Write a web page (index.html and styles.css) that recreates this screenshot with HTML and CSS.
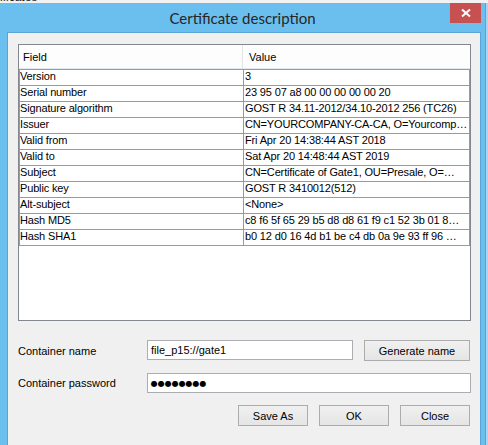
FILE: index.html
```html
<!DOCTYPE html>
<html>
<head>
<meta charset="utf-8">
<link rel="stylesheet" href="styles.css">
</head>
<body>
<div class="bg-strip"><span>ificates</span></div>
<div class="window">
  <div class="titlebar">
    <div></div>
    <div class="title">Certificate description</div>
    <div class="close">
      <svg width="10" height="8" viewBox="0 0 10 8"><path d="M1 0.5 L9 7.5 M9 0.5 L1 7.5" stroke="#fff" stroke-width="2" fill="none"/></svg>
    </div>
  </div>
  <div class="client">
    <div class="table">
      <div class="thead">
        <div class="th c1">Field</div>
        <div class="th c2">Value</div>
      </div>
      <div class="tbody">
        <div class="row first"><div class="td c1">Version</div><div class="td c2">3</div></div>
        <div class="row"><div class="td c1">Serial number</div><div class="td c2">23 95 07 a8 00 00 00 00 00 20</div></div>
        <div class="row"><div class="td c1">Signature algorithm</div><div class="td c2">GOST R 34.11-2012/34.10-2012 256 (TC26)</div></div>
        <div class="row"><div class="td c1">Issuer</div><div class="td c2">CN=YOURCOMPANY-CA-CA, O=Yourcomp…</div></div>
        <div class="row"><div class="td c1">Valid from</div><div class="td c2">Fri Apr 20 14:38:44 AST 2018</div></div>
        <div class="row"><div class="td c1">Valid to</div><div class="td c2">Sat Apr 20 14:48:44 AST 2019</div></div>
        <div class="row"><div class="td c1">Subject</div><div class="td c2">CN=Certificate of Gate1, OU=Presale, O=…</div></div>
        <div class="row"><div class="td c1">Public key</div><div class="td c2">GOST R 3410012(512)</div></div>
        <div class="row"><div class="td c1">Alt-subject</div><div class="td c2">&lt;None&gt;</div></div>
        <div class="row"><div class="td c1">Hash MD5</div><div class="td c2">c8 f6 5f 65 29 b5 d8 d8 61 f9 c1 52 3b 01 8…</div></div>
        <div class="row"><div class="td c1">Hash SHA1</div><div class="td c2">b0 12 d0 16 4d b1 be c4 db 0a 9e 93 ff 96 …</div></div>
      </div>
    </div>
    <div class="frow r1">
      <div class="label">Container name</div>
      <div class="field name">file_p15://gate1</div>
      <div class="btn gen">Generate name</div>
    </div>
    <div class="frow r2">
      <div class="label">Container password</div>
      <div class="field pass"><span class="dots">●●●●●●●●</span></div>
    </div>
    <div class="buttons">
      <div class="btn">Save As</div>
      <div class="btn">OK</div>
      <div class="btn">Close</div>
    </div>
  </div>
</div>
</body>
</html>
```

FILE: styles.css
```css
html, body {
  margin: 0;
  padding: 0;
}
body {
  width: 488px;
  height: 445px;
  overflow: hidden;
  background: #a9d5f2;
  font-family: "Liberation Sans", Arial, sans-serif;
  font-size: 11px;
  color: #000;
}
.bg-strip {
  height: 3px;
  overflow: hidden;
  background: #f2f2f2;
}
.bg-strip span {
  display: block;
  margin-top: -9px;
  font-size: 12px;
  line-height: 12px;
  color: #1e1e1e;
}
.window {
  width: 485px;
  height: 442px;
  background: #6bbfee;
  border-right: 1px solid #56a6da;
}
.titlebar {
  display: grid;
  grid-template-columns: 1fr auto 1fr;
  height: 29px;
}
.title {
  font-family: "Lato", "Liberation Sans", sans-serif;
  font-size: 15px;
  line-height: 29px;
  padding-top: 1px;
  color: #262626;
  white-space: nowrap;
}
.close {
  justify-self: end;
  width: 31px;
  height: 20px;
  margin-right: 4px;
  background: #c75050;
  display: flex;
  align-items: center;
  justify-content: center;
}
.client {
  margin: 0 4px 0 7px;
  height: 404px;
  border: 1px solid #5aa5d8;
  background: #f0f0f0;
  padding: 11px 9px 0 10px;
}
.table {
  height: 275px;
  border: 1px solid #828790;
  background: #fff;
}
.thead {
  display: flex;
  height: 23px;
  border-bottom: 1px solid #e2e8f1;
  background: #fdfdfd;
}
.th {
  line-height: 23px;
  padding-top: 1px;
}
.th.c1 {
  width: 219px;
  padding-left: 4px;
  border-right: 1px solid #e5e5e5;
}
.th.c2 {
  padding-left: 6px;
}
.row {
  display: flex;
  border-left: 1px solid #9a9a9a;
}
.row.first {
  border-top: 1px solid #9a9a9a;
}
.td {
  height: 13px;
  line-height: 13px;
  padding-bottom: 2px;
  border-right: 1px solid #9a9a9a;
  border-bottom: 1px solid #9a9a9a;
  white-space: nowrap;
  overflow: hidden;
  letter-spacing: -0.15px;
}
.td.c1 {
  width: 223px;
  padding-left: 0;
}
.td.c2 {
  width: 224px;
  padding-left: 1px;
}
.frow {
  display: flex;
  align-items: center;
}
.frow.r1 {
  margin-top: 19px;
  height: 21px;
}
.frow.r2 {
  margin-top: 12px;
  height: 20px;
}
.label {
  width: 129px;
}
.field {
  height: 18px;
  line-height: 18px;
  border: 1px solid #abadb3;
  background: #fff;
  padding-left: 3px;
  box-sizing: content-box;
}
.field.name {
  width: 201px;
  align-self: flex-start;
}
.field.pass {
  width: 320px;
}
.dots {
  font-family: "DejaVu Sans", sans-serif;
  font-size: 8px;
  letter-spacing: 0;
  position: relative;
  top: -1px;
}
.btn {
  box-sizing: border-box;
  height: 21px;
  border: 1px solid #acacac;
  background: linear-gradient(#f0f0f0, #e5e5e5);
  display: flex;
  align-items: center;
  justify-content: center;
}
.btn.gen {
  width: 106px;
  margin-left: 11px;
}
.buttons {
  margin-top: 12px;
  margin-right: 1px;
  display: flex;
  justify-content: flex-end;
  gap: 11px;
}
.buttons .btn {
  width: 70px;
}
```
